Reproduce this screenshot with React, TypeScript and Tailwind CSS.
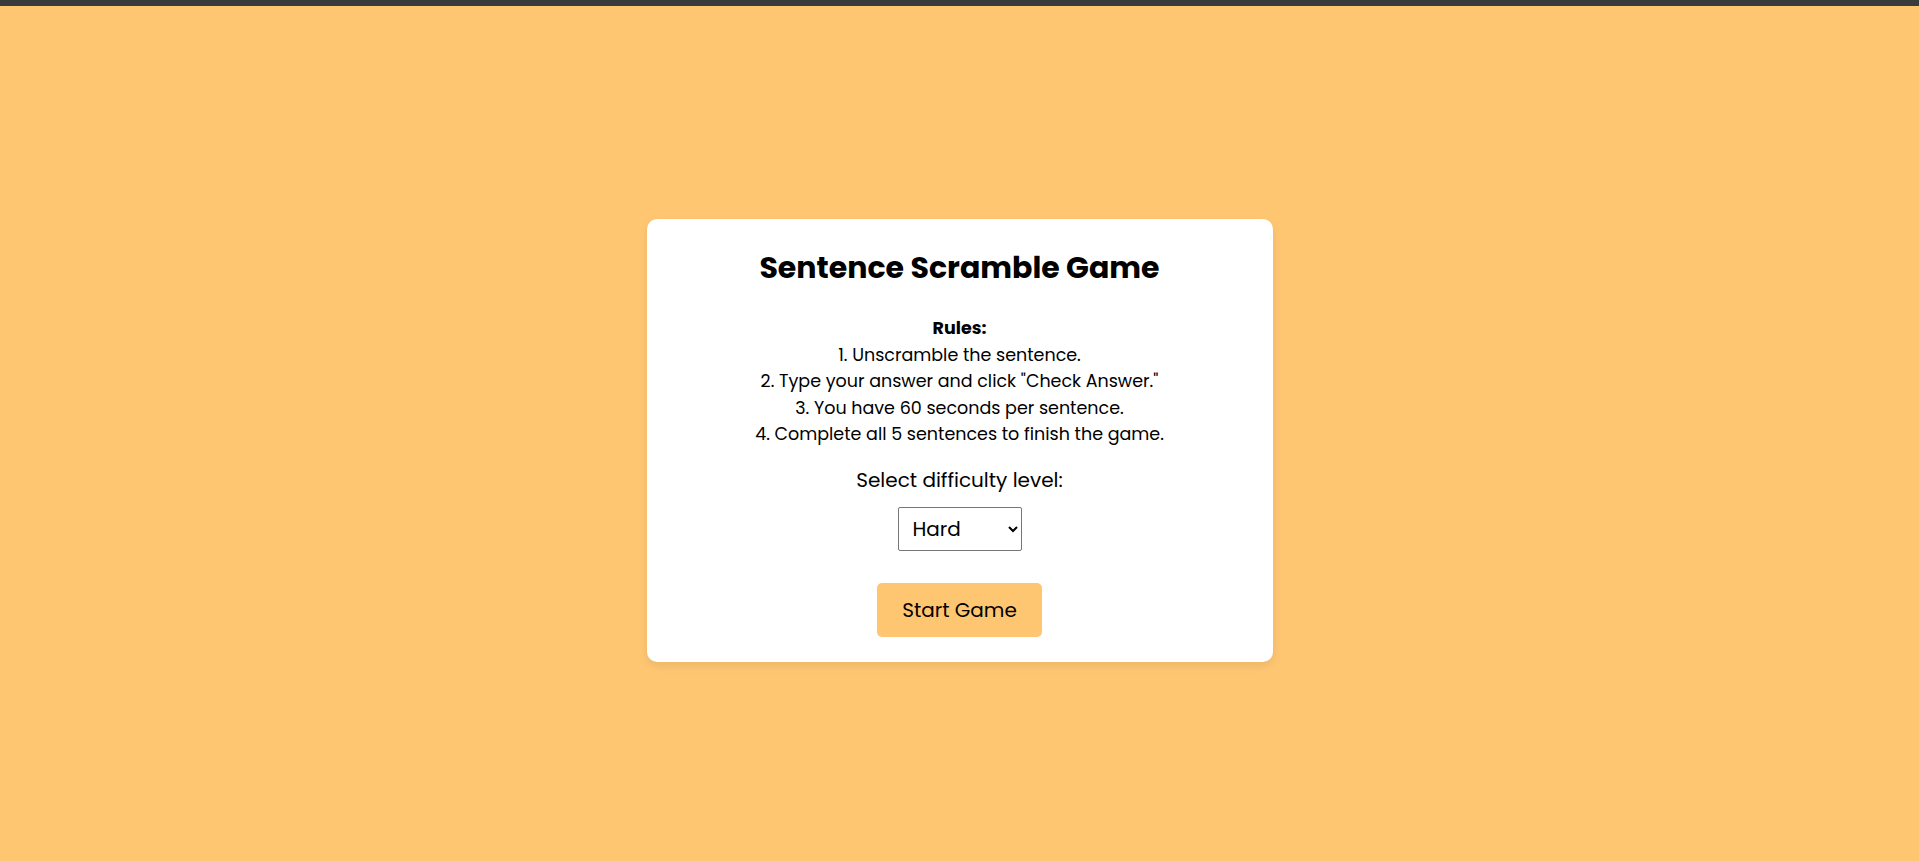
import React, { useState } from 'react';

export default function App() {
  const [level, setLevel] = useState('hard');

  return (
    <div
      className="min-h-screen flex flex-col bg-[#ffc672] text-black"
      style={{ fontFamily: '"Poppins", "Open Sans", "Liberation Sans", sans-serif' }}
    >
      <div className="h-[6px] bg-[#3b3b3b]" />
      <div className="flex-1 flex items-center justify-center pt-[14px]">
        <div className="w-[626px] bg-white rounded-[10px] shadow-[0_4px_10px_rgba(0,0,0,0.08)] px-6 pt-[25px] pb-[25px] flex flex-col items-center text-center">
          <h1 className="text-[30px] leading-[48px] font-bold">Sentence Scramble Game</h1>

          <div className="mt-[23px] text-[17.5px] leading-[26.5px]">
            <p className="font-bold">Rules:</p>
            <p>1. Unscramble the sentence.</p>
            <p>2. Type your answer and click "Check Answer."</p>
            <p>3. You have 60 seconds per sentence.</p>
            <p>4. Complete all 5 sentences to finish the game.</p>
          </div>

          <label htmlFor="difficulty" className="mt-[18px] text-[20px] leading-[28px]">
            Select difficulty level:
          </label>
          <select
            id="difficulty"
            value={level}
            onChange={e => setLevel(e.target.value)}
            className="mt-[13px] w-[124px] h-[44px] pl-[10px] pr-2 border border-[#767676] rounded-[2px] text-[20px] bg-white"
          >
            <option value="easy">Easy</option>
            <option value="medium">Medium</option>
            <option value="hard">Hard</option>
          </select>

          <button className="mt-[32px] w-[165px] h-[54px] rounded-[5px] bg-[#ffc672] text-[20px]">
            Start Game
          </button>
        </div>
      </div>
    </div>
  );
}
